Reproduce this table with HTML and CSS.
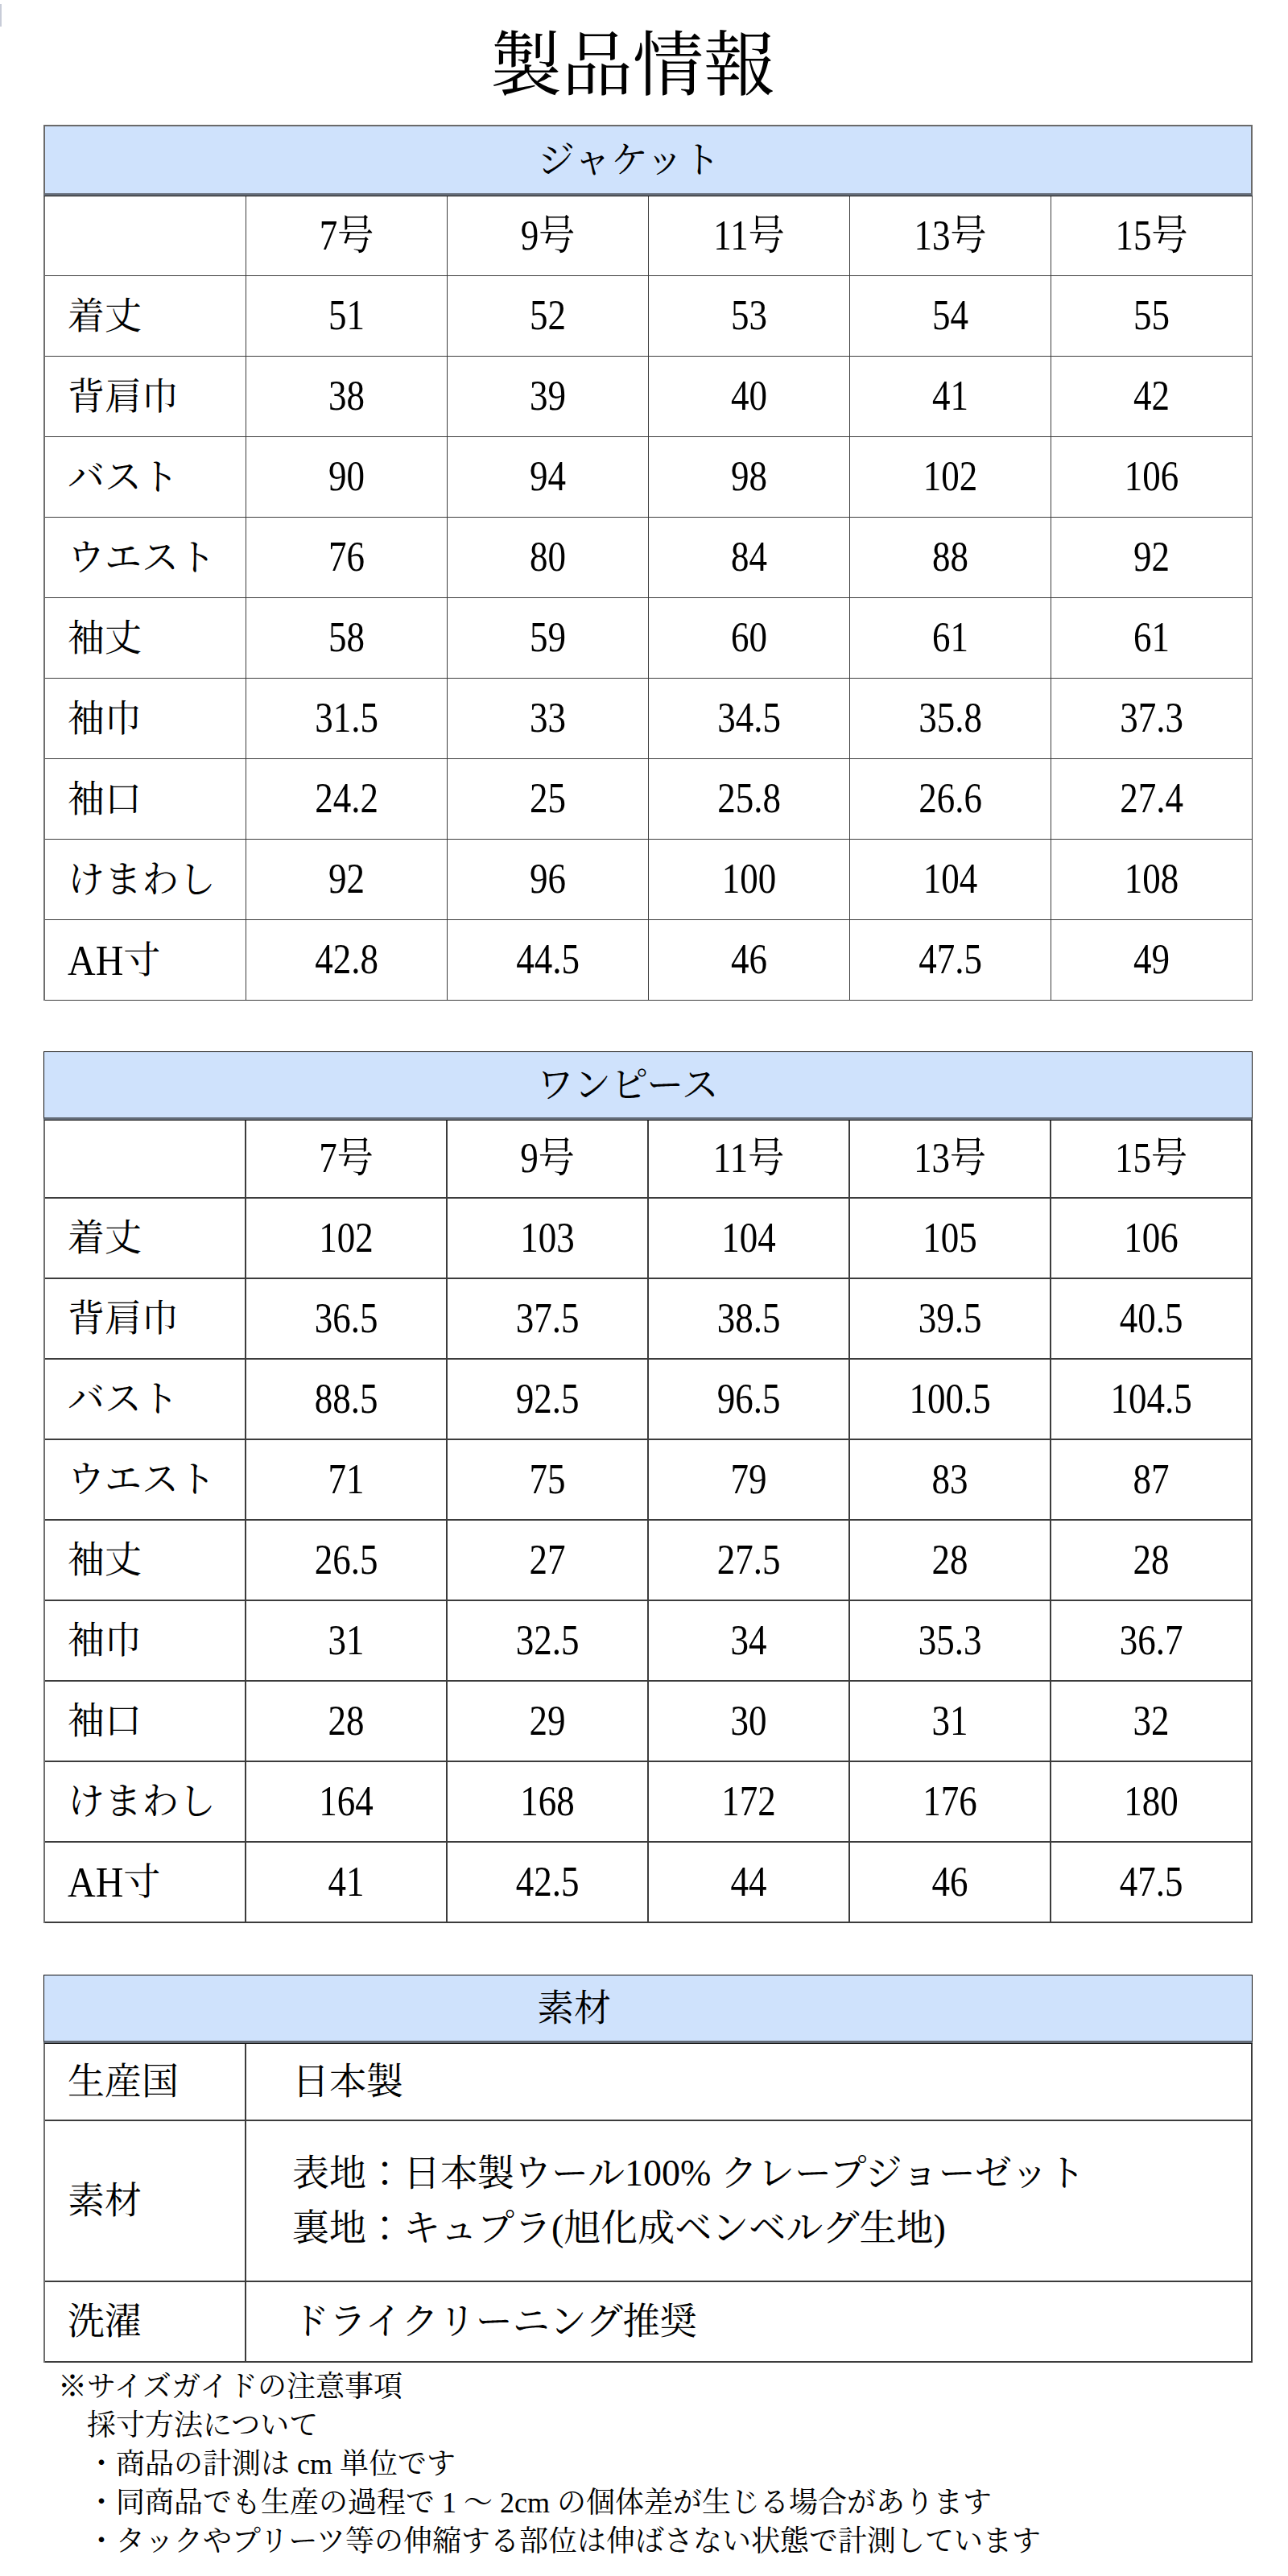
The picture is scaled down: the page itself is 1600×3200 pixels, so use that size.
FILE: index.html
```html
<!DOCTYPE html>
<html lang="ja">
<head>
<meta charset="utf-8">
<title>製品情報</title>
<link rel="stylesheet" href="styles.css">
</head>
<body>
<div class="edge-mark"></div>
<h1 class="page-title">製品情報</h1>

<section class="spec spec-jacket">
  <div class="spec-head">ジャケット</div>
  <div class="spec-grid">
    <div class="cell corner first"></div><div class="cell size first"><span class="v">7号</span></div><div class="cell size first"><span class="v">9号</span></div><div class="cell size first"><span class="v">11号</span></div><div class="cell size first"><span class="v">13号</span></div><div class="cell size first"><span class="v">15号</span></div>
    <div class="cell label">着丈</div><div class="cell num"><span class="v">51</span></div><div class="cell num"><span class="v">52</span></div><div class="cell num"><span class="v">53</span></div><div class="cell num"><span class="v">54</span></div><div class="cell num"><span class="v">55</span></div>
    <div class="cell label">背肩巾</div><div class="cell num"><span class="v">38</span></div><div class="cell num"><span class="v">39</span></div><div class="cell num"><span class="v">40</span></div><div class="cell num"><span class="v">41</span></div><div class="cell num"><span class="v">42</span></div>
    <div class="cell label">バスト</div><div class="cell num"><span class="v">90</span></div><div class="cell num"><span class="v">94</span></div><div class="cell num"><span class="v">98</span></div><div class="cell num"><span class="v">102</span></div><div class="cell num"><span class="v">106</span></div>
    <div class="cell label">ウエスト</div><div class="cell num"><span class="v">76</span></div><div class="cell num"><span class="v">80</span></div><div class="cell num"><span class="v">84</span></div><div class="cell num"><span class="v">88</span></div><div class="cell num"><span class="v">92</span></div>
    <div class="cell label">袖丈</div><div class="cell num"><span class="v">58</span></div><div class="cell num"><span class="v">59</span></div><div class="cell num"><span class="v">60</span></div><div class="cell num"><span class="v">61</span></div><div class="cell num"><span class="v">61</span></div>
    <div class="cell label">袖巾</div><div class="cell num"><span class="v">31.5</span></div><div class="cell num"><span class="v">33</span></div><div class="cell num"><span class="v">34.5</span></div><div class="cell num"><span class="v">35.8</span></div><div class="cell num"><span class="v">37.3</span></div>
    <div class="cell label">袖口</div><div class="cell num"><span class="v">24.2</span></div><div class="cell num"><span class="v">25</span></div><div class="cell num"><span class="v">25.8</span></div><div class="cell num"><span class="v">26.6</span></div><div class="cell num"><span class="v">27.4</span></div>
    <div class="cell label">けまわし</div><div class="cell num"><span class="v">92</span></div><div class="cell num"><span class="v">96</span></div><div class="cell num"><span class="v">100</span></div><div class="cell num"><span class="v">104</span></div><div class="cell num"><span class="v">108</span></div>
    <div class="cell label"><span class="lat">AH</span>寸</div><div class="cell num"><span class="v">42.8</span></div><div class="cell num"><span class="v">44.5</span></div><div class="cell num"><span class="v">46</span></div><div class="cell num"><span class="v">47.5</span></div><div class="cell num"><span class="v">49</span></div>
  </div>
</section>

<section class="spec spec-dress">
  <div class="spec-head">ワンピース</div>
  <div class="spec-grid">
    <div class="cell corner first"></div><div class="cell size first"><span class="v">7号</span></div><div class="cell size first"><span class="v">9号</span></div><div class="cell size first"><span class="v">11号</span></div><div class="cell size first"><span class="v">13号</span></div><div class="cell size first"><span class="v">15号</span></div>
    <div class="cell label">着丈</div><div class="cell num"><span class="v">102</span></div><div class="cell num"><span class="v">103</span></div><div class="cell num"><span class="v">104</span></div><div class="cell num"><span class="v">105</span></div><div class="cell num"><span class="v">106</span></div>
    <div class="cell label">背肩巾</div><div class="cell num"><span class="v">36.5</span></div><div class="cell num"><span class="v">37.5</span></div><div class="cell num"><span class="v">38.5</span></div><div class="cell num"><span class="v">39.5</span></div><div class="cell num"><span class="v">40.5</span></div>
    <div class="cell label">バスト</div><div class="cell num"><span class="v">88.5</span></div><div class="cell num"><span class="v">92.5</span></div><div class="cell num"><span class="v">96.5</span></div><div class="cell num"><span class="v">100.5</span></div><div class="cell num"><span class="v">104.5</span></div>
    <div class="cell label">ウエスト</div><div class="cell num"><span class="v">71</span></div><div class="cell num"><span class="v">75</span></div><div class="cell num"><span class="v">79</span></div><div class="cell num"><span class="v">83</span></div><div class="cell num"><span class="v">87</span></div>
    <div class="cell label">袖丈</div><div class="cell num"><span class="v">26.5</span></div><div class="cell num"><span class="v">27</span></div><div class="cell num"><span class="v">27.5</span></div><div class="cell num"><span class="v">28</span></div><div class="cell num"><span class="v">28</span></div>
    <div class="cell label">袖巾</div><div class="cell num"><span class="v">31</span></div><div class="cell num"><span class="v">32.5</span></div><div class="cell num"><span class="v">34</span></div><div class="cell num"><span class="v">35.3</span></div><div class="cell num"><span class="v">36.7</span></div>
    <div class="cell label">袖口</div><div class="cell num"><span class="v">28</span></div><div class="cell num"><span class="v">29</span></div><div class="cell num"><span class="v">30</span></div><div class="cell num"><span class="v">31</span></div><div class="cell num"><span class="v">32</span></div>
    <div class="cell label">けまわし</div><div class="cell num"><span class="v">164</span></div><div class="cell num"><span class="v">168</span></div><div class="cell num"><span class="v">172</span></div><div class="cell num"><span class="v">176</span></div><div class="cell num"><span class="v">180</span></div>
    <div class="cell label"><span class="lat">AH</span>寸</div><div class="cell num"><span class="v">41</span></div><div class="cell num"><span class="v">42.5</span></div><div class="cell num"><span class="v">44</span></div><div class="cell num"><span class="v">46</span></div><div class="cell num"><span class="v">47.5</span></div>
  </div>
</section>

<section class="spec spec-material">
  <div class="spec-head">素材</div>
  <div class="mat-grid">
    <div class="cell label first">生産国</div><div class="cell text first">日本製</div>
    <div class="cell label tall">素材</div><div class="cell text tall"><p class="mat-line">表地：日本製ウール100% クレープジョーゼット</p><p class="mat-line">裏地：キュプラ(旭化成ベンベルグ生地)</p></div>
    <div class="cell label">洗濯</div><div class="cell text">ドライクリーニング推奨</div>
  </div>
</section>

<div class="notes">
  <p class="note-title">※サイズガイドの注意事項</p>
  <p class="note-sub">採寸方法について</p>
  <p class="note-item">・商品の計測は cm 単位です</p>
  <p class="note-item">・同商品でも生産の過程で 1 ～ 2cm の個体差が生じる場合があります</p>
  <p class="note-item">・タックやプリーツ等の伸縮する部位は伸ばさない状態で計測しています</p>
</div>
</body>
</html>
```

FILE: styles.css
```css
* {
  box-sizing: border-box;
}

html, body {
  margin: 0;
  padding: 0;
  background: #ffffff;
}

body {
  position: relative;
  color: #000;
  font-family: "Liberation Serif", "Noto Serif CJK JP", "Noto Sans CJK JP", serif;
  font-weight: 400;
}

.edge-mark {
  position: absolute;
  left: 0;
  top: 5px;
  width: 2px;
  height: 28px;
  background: #c8ccd8;
}

.page-title {
  margin: 0;
  padding: 38px 28px 0 0;
  height: 155px;
  font-size: 88px;
  line-height: 88px;
  font-weight: 400;
  text-align: center;
}

.spec {
  width: 1502px;
  margin-left: 54px;
}

.spec-dress {
  margin-top: 63px;
}

.spec-material {
  margin-top: 64px;
}

.spec-head {
  height: 88px;
  padding-left: 612px;
  display: flex;
  align-items: center;
  background: #cfe2fc;
  border: 2px solid #6a6a6a;
  border-bottom: 3px solid #646c78;
  font-size: 46px;
  line-height: 1;
}

.spec-dress .spec-head,
.spec-material .spec-head {
  border-top: 1px solid #111;
  border-left: 1px solid #111;
  border-right: 1px solid #111;
  height: 85px;
}

.spec-grid,
.mat-grid {
  display: grid;
  border-top: 1px solid #1a1a1a;
  border-left: 2px solid #6e6e6e;
}

.spec-grid {
  grid-template-columns: repeat(6, 250px);
  grid-auto-rows: auto;
}

.mat-grid {
  grid-template-columns: 250px 1250px;
  grid-template-rows: 96px 200px 100px;
}

.cell {
  display: flex;
  align-items: center;
  height: 100px;
  border-right: 2px solid #3c3c3c;
  border-bottom: 2px solid #3c3c3c;
  font-size: 46px;
  line-height: 1;
  white-space: nowrap;
}

.spec-grid .cell.first {
  height: 99px;
}

.spec-dress .spec-grid .cell.first {
  height: 97px;
}

.mat-grid .cell {
  height: auto;
}

.spec-jacket .cell {
  border-right-width: 1.5px;
  border-bottom-width: 1.5px;
}

.cell.label {
  padding-left: 28px;
}

.lat {
  display: inline-block;
  font-size: 48px;
  transform: scaleY(1.12);
}

.cell.num,
.cell.size {
  justify-content: center;
  font-size: 45px;
}

.v {
  display: inline-block;
  transform: scaleY(1.15);
}

.cell.text {
  padding-left: 57px;
  flex-direction: column;
  align-items: flex-start;
  justify-content: center;
}

.mat-line {
  margin: 0;
  line-height: 68px;
}

.notes {
  margin: 6px 0 0 72px;
  font-size: 36px;
  line-height: 48px;
}

.notes p {
  margin: 0;
}

.note-sub,
.note-item {
  padding-left: 36px;
}
```
